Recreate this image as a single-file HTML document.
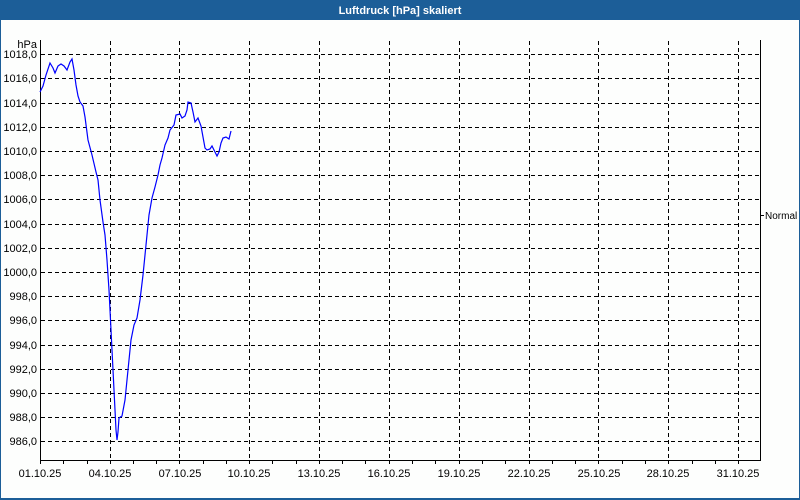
<!DOCTYPE html>
<html><head><meta charset="utf-8"><style>
html,body{margin:0;padding:0;width:800px;height:500px;overflow:hidden;background:#fff;font-family:"Liberation Sans",sans-serif}
</style></head><body>
<svg width="800" height="500" xmlns="http://www.w3.org/2000/svg" style="position:absolute;left:0;top:0">
<rect x="0" y="0" width="800" height="500" fill="#1c5e98"/>
<rect x="1" y="20" width="798" height="478" fill="#fdfefd"/>
<text x="400" y="14" fill="#fff" font-size="11" font-weight="bold" text-anchor="middle">Luftdruck [hPa] skaliert</text>
<g stroke="#000" stroke-width="1" stroke-dasharray="4,3" fill="none">
<path d="M41 54.5H760M41 78.5H760M41 103.5H760M41 127.5H760M41 151.5H760M41 175.5H760M41 199.5H760M41 224.5H760M41 248.5H760M41 272.5H760M41 296.5H760M41 320.5H760M41 345.5H760M41 369.5H760M41 393.5H760M41 417.5H760M41 441.5H760"/>
<path d="M110.5 41V460M179.5 41V460M249.5 41V460M319.5 41V460M389.5 41V460M459.5 41V460M529.5 41V460M598.5 41V460M668.5 41V460M738.5 41V460"/>
</g>
<path d="M40.5 40V460.5H760.5V40M760 215.5H764" stroke="#000" fill="none"/>
<g stroke="#000"><path d="M40.5 460v4M63.5 460v4M87.5 460v4M110.5 460v4M133.5 460v4M156.5 460v4M179.5 460v4M203.5 460v4M226.5 460v4M249.5 460v4M272.5 460v4M296.5 460v4M319.5 460v4M342.5 460v4M365.5 460v4M389.5 460v4M412.5 460v4M435.5 460v4M459.5 460v4M482.5 460v4M505.5 460v4M529.5 460v4M552.5 460v4M575.5 460v4M598.5 460v4M622.5 460v4M645.5 460v4M668.5 460v4M692.5 460v4M715.5 460v4M738.5 460v4"/></g>
<polyline fill="none" stroke="#0000ff" stroke-width="1.2" points="40,92 43,86 46,75 50,63 53,68 55,73 58,66 61,64 64,66 67,70 70,62 72,59 74,70 76,85 78,96 80,102 83,106 85,117 88,140 92,155 96,172 98,180 100,200 103,222 105,235 107,260 109,290 111,330 113,370 114,390 115,410 116,430 117,440 118,432 119,418 122,416 125,400 128,370 131,340 134,325 137,318 140,300 143,275 146,245 149,215 152,198 155,187 158,175 160,165 162,158 165,145 168,138 170,130 174,125 176,115 180,114 182,118 185,116 187,110 188,102 191,103 193,112 195,122 198,118 201,126 203,137 205,148 207,150 210,149 212,146 215,152 217,156 219,152 221,143 223,138 226,137 229,139 231,131"/>
<g font-size="11" fill="#000" text-anchor="end">
<text x="37" y="48">hPa</text>
<text x="37" y="58">1018,0</text><text x="37" y="82">1016,0</text><text x="37" y="107">1014,0</text><text x="37" y="131">1012,0</text><text x="37" y="155">1010,0</text><text x="37" y="179">1008,0</text><text x="37" y="203">1006,0</text><text x="37" y="228">1004,0</text><text x="37" y="252">1002,0</text><text x="37" y="276">1000,0</text><text x="37" y="300">998,0</text><text x="37" y="324">996,0</text><text x="37" y="349">994,0</text><text x="37" y="373">992,0</text><text x="37" y="397">990,0</text><text x="37" y="421">988,0</text><text x="37" y="445">986,0</text>
</g>
<g font-size="11" fill="#000" text-anchor="middle">
<text x="40" y="477">01.10.25</text><text x="110" y="477">04.10.25</text><text x="180" y="477">07.10.25</text><text x="249" y="477">10.10.25</text><text x="319" y="477">13.10.25</text><text x="389" y="477">16.10.25</text><text x="459" y="477">19.10.25</text><text x="529" y="477">22.10.25</text><text x="599" y="477">25.10.25</text><text x="668" y="477">28.10.25</text><text x="738" y="477">31.10.25</text>
</g>
<text x="765" y="219" font-size="10" fill="#000">Normal</text>
</svg>
</body></html>
